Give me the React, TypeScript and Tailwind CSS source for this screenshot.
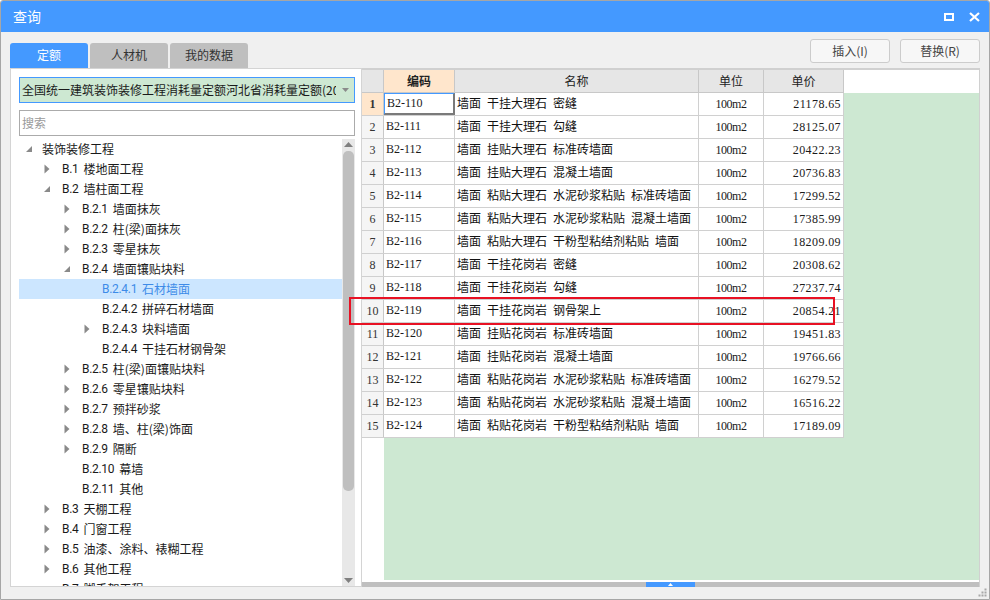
import React from 'react';

const cjk = "font-['Noto_Sans_CJK_SC',sans-serif]";
const serif = "font-['Liberation_Serif','Noto_Sans_CJK_SC',serif]";

type TreeRow = { level: number; code: string; name: string; arrow?: 'open' | 'closed'; selected?: boolean };

const treeRows: TreeRow[] = [
  { level: 0, code: '', name: '装饰装修工程', arrow: 'open' },
  { level: 1, code: 'B.1', name: '楼地面工程', arrow: 'closed' },
  { level: 1, code: 'B.2', name: '墙柱面工程', arrow: 'open' },
  { level: 2, code: 'B.2.1', name: '墙面抹灰', arrow: 'closed' },
  { level: 2, code: 'B.2.2', name: '柱(梁)面抹灰', arrow: 'closed' },
  { level: 2, code: 'B.2.3', name: '零星抹灰', arrow: 'closed' },
  { level: 2, code: 'B.2.4', name: '墙面镶贴块料', arrow: 'open' },
  { level: 3, code: 'B.2.4.1', name: '石材墙面', selected: true },
  { level: 3, code: 'B.2.4.2', name: '拼碎石材墙面' },
  { level: 3, code: 'B.2.4.3', name: '块料墙面', arrow: 'closed' },
  { level: 3, code: 'B.2.4.4', name: '干挂石材钢骨架' },
  { level: 2, code: 'B.2.5', name: '柱(梁)面镶贴块料', arrow: 'closed' },
  { level: 2, code: 'B.2.6', name: '零星镶贴块料', arrow: 'closed' },
  { level: 2, code: 'B.2.7', name: '预拌砂浆', arrow: 'closed' },
  { level: 2, code: 'B.2.8', name: '墙、柱(梁)饰面', arrow: 'closed' },
  { level: 2, code: 'B.2.9', name: '隔断', arrow: 'closed' },
  { level: 2, code: 'B.2.10', name: '幕墙' },
  { level: 2, code: 'B.2.11', name: '其他' },
  { level: 1, code: 'B.3', name: '天棚工程', arrow: 'closed' },
  { level: 1, code: 'B.4', name: '门窗工程', arrow: 'closed' },
  { level: 1, code: 'B.5', name: '油漆、涂料、裱糊工程', arrow: 'closed' },
  { level: 1, code: 'B.6', name: '其他工程', arrow: 'closed' },
  { level: 1, code: 'B.7', name: '脚手架工程' },
];

const rows = [
  ['B2-110', '墙面 干挂大理石 密缝', '21178.65'],
  ['B2-111', '墙面 干挂大理石 勾缝', '28125.07'],
  ['B2-112', '墙面 挂贴大理石 标准砖墙面', '20422.23'],
  ['B2-113', '墙面 挂贴大理石 混凝土墙面', '20736.83'],
  ['B2-114', '墙面 粘贴大理石 水泥砂浆粘贴 标准砖墙面', '17299.52'],
  ['B2-115', '墙面 粘贴大理石 水泥砂浆粘贴 混凝土墙面', '17385.99'],
  ['B2-116', '墙面 粘贴大理石 干粉型粘结剂粘贴 墙面', '18209.09'],
  ['B2-117', '墙面 干挂花岗岩 密缝', '20308.62'],
  ['B2-118', '墙面 干挂花岗岩 勾缝', '27237.74'],
  ['B2-119', '墙面 干挂花岗岩 钢骨架上', '20854.21'],
  ['B2-120', '墙面 挂贴花岗岩 标准砖墙面', '19451.83'],
  ['B2-121', '墙面 挂贴花岗岩 混凝土墙面', '19766.66'],
  ['B2-122', '墙面 粘贴花岗岩 水泥砂浆粘贴 标准砖墙面', '16279.52'],
  ['B2-123', '墙面 粘贴花岗岩 水泥砂浆粘贴 混凝土墙面', '16516.22'],
  ['B2-124', '墙面 粘贴花岗岩 干粉型粘结剂粘贴 墙面', '17189.09'],
];

const Arrow = ({ type }: { type: 'open' | 'closed' }) =>
  type === 'open' ? (
    <svg width="8" height="8" viewBox="0 0 8 8" className="block">
      <path d="M7 1V7H1Z" fill="#8a8a8a" />
    </svg>
  ) : (
    <svg width="8" height="10" viewBox="0 0 8 10" className="block">
      <path d="M1.5 0.5L6.5 5L1.5 9.5Z" fill="#8a8a8a" />
    </svg>
  );

const TreeItem = ({ row }: { row: TreeRow }) => {
  const indent = ['pl-[6px]', 'pl-[24px]', 'pl-[44px]', 'pl-[64px]'][row.level];
  return (
    <div
      className={`flex h-[20px] shrink-0 items-center text-[12px] ${indent} ${
        row.selected ? 'bg-[#cce6ff] text-[#3d8be8]' : 'text-[#1a1a1a]'
      }`}
    >
      <span className={`flex shrink-0 items-center justify-start ${row.level === 0 ? 'w-[17px]' : 'w-[19px]'}`}>
        {row.arrow && <Arrow type={row.arrow} />}
      </span>
      {row.code && (
        <span className="mr-[5px] font-['Roboto',sans-serif] tracking-[-0.3px]">{row.code}</span>
      )}
      <span className={cjk}>{row.name}</span>
    </div>
  );
};

const Tab = ({ label, active }: { label: string; active?: boolean }) => (
  <div
    className={`flex h-[25px] w-[78px] items-center justify-center rounded-t-[3px] pb-[1px] text-[12px] ${cjk} ${
      active ? 'bg-[#4499ff] text-white' : 'bg-[#bfbfbf] text-[#333333]'
    }`}
  >
    {label}
  </div>
);

const ToolButton = ({ label }: { label: string }) => (
  <button className={`h-[24px] w-[80px] rounded-[3px] border border-[#cccccc] bg-[#f7f7f7] text-[12px] text-[#444444] ${cjk}`}>
    {label}
  </button>
);

const HeadCell = ({ label, className }: { label: string; className: string }) => (
  <div className={`flex items-center justify-center border-r border-[#c8c8c8] text-[12px] text-[#222222] ${cjk} ${className}`}>
    {label}
  </div>
);

export default function App() {
  return (
    <div className="relative flex h-[600px] w-[990px] flex-col overflow-hidden rounded-t-[3px] border border-[#a6a6a6] bg-[#f0f0f0]">
      <div className={`flex h-[31px] shrink-0 items-center justify-between bg-[#4499ff] pl-[12px] pr-[9px] text-[14px] text-white ${cjk}`}>
        <span>查询</span>
        <div className="flex items-center gap-[15px]">
          <svg width="10" height="8" viewBox="0 0 10 8" className="block">
            <rect x="1" y="1" width="8" height="6" fill="none" stroke="#ffffff" strokeWidth="2" />
          </svg>
          <svg width="11" height="10" viewBox="0 0 11 10" className="block">
            <path d="M1 1L10 9M10 1L1 9" fill="none" stroke="#ffffff" strokeWidth="2.2" />
          </svg>
        </div>
      </div>

      <div className="flex min-h-0 flex-1 flex-col px-[9px] pt-[7px]">
        <div className="flex h-[29px] shrink-0 items-start justify-between">
          <div className="flex gap-[2px] self-end">
            <Tab label="定额" active />
            <Tab label="人材机" />
            <Tab label="我的数据" />
          </div>
          <div className="flex gap-[10px]">
            <ToolButton label="插入(I)" />
            <ToolButton label="替换(R)" />
          </div>
        </div>

        <div className="flex h-[519px] shrink-0">
          {/* left panel */}
          <div className="flex h-full w-[352px] shrink-0 flex-col border border-[#d4d4d4] bg-white pl-[8px] pr-[6px] pt-[8px]">
            <div className={`flex h-[26px] shrink-0 items-center border border-[#4499ff] bg-[#cde8d2] pl-[2px] text-[12px] text-[#1a1a1a] ${cjk}`}>
              <span className="w-[314px] overflow-hidden whitespace-nowrap">全国统一建筑装饰装修工程消耗量定额河北省消耗量定额(2012)</span>
              <svg width="7" height="4" viewBox="0 0 7 4" className="ml-[6px] block">
                <path d="M0 0H7L3.5 4Z" fill="#8a8a8a" />
              </svg>
            </div>
            <div className={`mt-[7px] flex h-[26px] shrink-0 items-center border border-[#ababab] bg-white pl-[2px] text-[12px] text-[#9a9a9a] ${cjk}`}>
              搜索
            </div>
            <div className="mt-[3px] flex min-h-0 flex-1">
              <div className="flex min-w-0 flex-1 flex-col overflow-hidden">
                {treeRows.map((row) => (
                  <TreeItem key={row.code + row.name} row={row} />
                ))}
              </div>
              <div className="flex w-[13px] shrink-0 flex-col items-center bg-[#e8e8e8] pt-[3px]">
                <svg width="9" height="5" viewBox="0 0 9 5" className="block shrink-0">
                  <path d="M4.5 0L9 5H0Z" fill="#808080" />
                </svg>
                <div className="mt-[4px] h-[340px] w-[11px] shrink-0 rounded-[5px] bg-[#bfbfbf]" />
                <svg width="9" height="5" viewBox="0 0 9 5" className="mt-[87px] block shrink-0">
                  <path d="M0 0H9L4.5 5Z" fill="#808080" />
                </svg>
              </div>
            </div>
          </div>

          {/* right grid */}
          <div className="flex h-full min-w-0 flex-1 flex-col border-r border-t border-[#d0d0d0] bg-white">
            <div className="flex min-h-0 flex-1 border-t border-[#d0d0d0]">
              <div className="flex w-[482px] shrink-0 flex-col">
                <div className="flex h-[23px] shrink-0 border-b border-[#c8c8c8] bg-[#e6e6e6]">
                  <div className="w-[22px] shrink-0 border-r border-[#c8c8c8]" />
                  <HeadCell label="编码" className="w-[71px] bg-[#ffe6cc] font-bold" />
                  <HeadCell label="名称" className="w-[244px]" />
                  <HeadCell label="单位" className="w-[65px]" />
                  <HeadCell label="单价" className="w-[80px]" />
                </div>
                {rows.map((row, i) => (
                  <div key={row[0]} className="flex h-[23px] shrink-0 border-b border-[#d0d0d0]">
                    <div
                      className={`flex w-[22px] shrink-0 items-center justify-center border-r border-[#c8c8c8] text-[12px] text-[#333333] ${serif} ${
                        i === 0 ? 'bg-[#ffe6cc] font-bold' : 'bg-[#f5f5f5]'
                      }`}
                    >
                      {i + 1}
                    </div>
                    <div
                      className={`flex w-[71px] shrink-0 items-center pb-[2px] pl-[2px] text-[12px] text-[#1a1a1a] ${serif} ${
                        i === 0
                          ? 'border-b-2 border-l border-r-2 border-t border-b-[#7a7a7a] border-l-[#4499ff] border-r-[#7a7a7a] border-t-[#4499ff]'
                          : 'border-r border-[#d0d0d0]'
                      }`}
                    >
                      {row[0]}
                    </div>
                    <div className={`flex w-[244px] shrink-0 items-center whitespace-pre border-r border-[#d0d0d0] pb-[2px] pl-[2px] text-[12px] text-[#111111] [word-spacing:3.3px] ${cjk}`}>
                      {row[1]}
                    </div>
                    <div className={`flex w-[65px] shrink-0 items-center justify-center border-r border-[#d0d0d0] pb-[1px] text-[12px] tracking-[-0.5px] text-[#1a1a1a] ${serif}`}>
                      100m2
                    </div>
                    <div className={`flex w-[80px] shrink-0 items-center justify-end border-r border-[#d0d0d0] pb-[1px] pr-[2px] text-[12px] tracking-[0.4px] text-[#1a1a1a] ${serif}`}>
                      {row[2]}
                    </div>
                  </div>
                ))}
                <div className="flex min-h-0 flex-1">
                  <div className="w-[22px] shrink-0" />
                  <div className="flex-1 bg-[#cde8d2]" />
                </div>
              </div>
              <div className="flex min-w-0 flex-1 flex-col">
                <div className="h-[23px] shrink-0 bg-white" />
                <div className="flex-1 bg-[#cde8d2]" />
              </div>
            </div>
            <div className="mt-[2px] flex h-[5px] shrink-0 bg-[#bfbfbf] pl-[284px]">
              <div className="flex h-[5px] w-[49px] items-center justify-center bg-[#4499ff]">
                <svg width="5" height="3" viewBox="0 0 5 3" className="block">
                  <path d="M2.5 0L5 3H0Z" fill="#ffffff" />
                </svg>
              </div>
            </div>
          </div>
        </div>
      </div>

      {/* resize grip */}
      <svg width="9" height="9" viewBox="0 0 9 9" className="absolute bottom-[2px] right-[2px] block">
        <path d="M6.5 0.5h2v2h-2zM3.5 3.5h2v2h-2zM6.5 3.5h2v2h-2zM0.5 6.5h2v2h-2zM3.5 6.5h2v2h-2zM6.5 6.5h2v2h-2z" fill="#a8a8a8" />
      </svg>

      {/* red annotation box drawn over the grid */}
      <div className="pointer-events-none absolute left-[348px] top-[296px] h-[28px] w-[486px] border-2 border-[#e81123]" />
    </div>
  );
}
